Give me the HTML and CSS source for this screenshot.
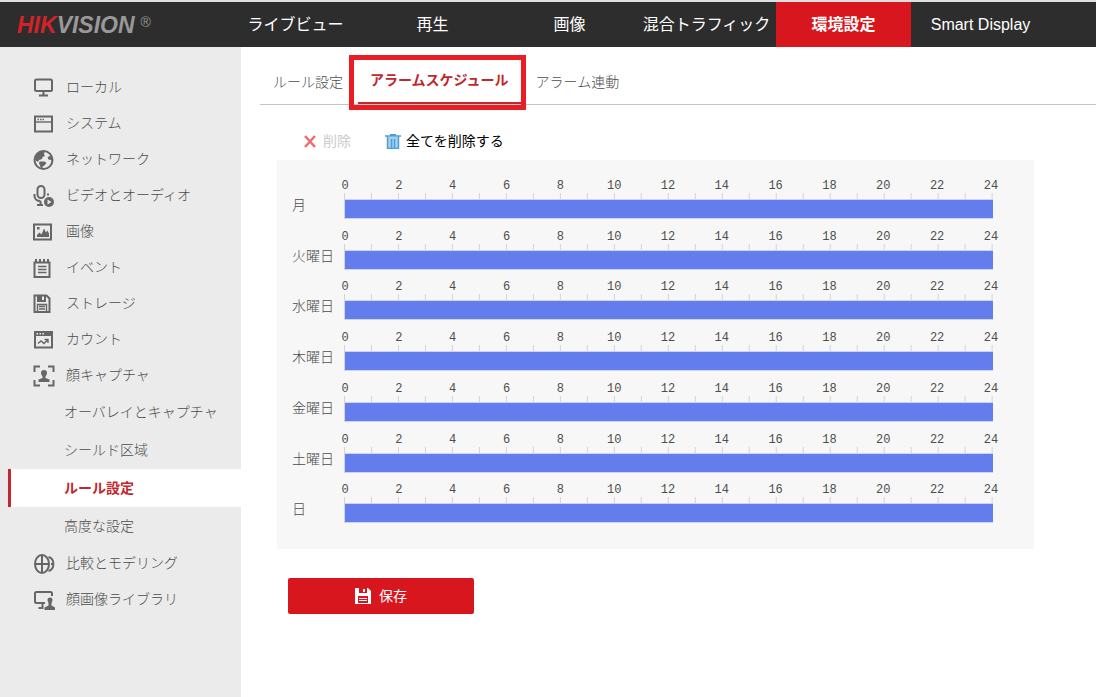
FILE: index.html
```html
<!DOCTYPE html>
<html lang="ja">
<head>
    <meta charset="utf-8">
    <title>環境設定</title>
    <link rel="stylesheet" href="styles.css">
</head>

<body>
    <header class="header">
        <a class="logo" href="#"><span class="logo-red">HIK</span>VISION<span class="logo-mark">®</span></a>
        <nav class="main-nav">
            <a href="#">ライブビュー</a>
            <a href="#">再生</a>
            <a href="#">画像</a>
            <a href="#">混合トラフィック</a>
            <a href="#" class="active">環境設定</a>
            <a href="#">Smart Display</a>
        </nav>
    </header>

    <div class="page">
        <nav class="sidebar">
            <a class="menu-item" href="#">
                <svg class="icon" viewBox="0 0 22 22"><rect x="2" y="2.500" width="17" height="11.500" rx="1.500"/><path d="M10.500 14v4M6 18.500h9"/></svg>
                ローカル
            </a>
            <a class="menu-item" href="#">
                <svg class="icon" viewBox="0 0 22 22"><rect x="2" y="3.500" width="17" height="15"/><path class="thin" d="M2 9h17"/><path class="thin" d="M4.500 6.500h1.500M7 6.500h1.500M9.500 6.500h1.500"/></svg>
                システム
            </a>
            <a class="menu-item" href="#">
                <svg class="icon" viewBox="0 0 22 22"><circle cx="10.500" cy="11" r="9"/><path class="fill" d="M2 11l1-5 4-4 4.500 1-.5 2.500 1 1.500-2.500 1-.5 2-3 1-1 2zM6.500 12.500h5l2 1.500-2 2.500-1.500.5-1 3-1.500-1.500-.5-2.500-1-1zM14.500 8.500l2.500-2 2.500 3v3l-1.500-1.500-2.500-.5z"/></svg>
                ネットワーク
            </a>
            <a class="menu-item" href="#">
                <svg class="icon" viewBox="0 0 22 22"><rect x="4.500" y="1" width="7" height="12" rx="3.500"/><path d="M1.500 9v2c0 2.500 2 5 6 5M7.500 16v4M4 20h6"/><path class="fill" d="M14 8.500h2v2h-2z"/><circle class="fill" cx="16" cy="17" r="5"/><path class="light" d="M14.500 14.500l4 2.500-4 2.500z"/></svg>
                ビデオとオーディオ
            </a>
            <a class="menu-item" href="#">
                <svg class="icon" viewBox="0 0 22 22"><rect x="1" y="3.500" width="17" height="15"/><path class="fill" d="M4 16v-2l2.500-2.500 2 2 2.500-6 2 4 1.500-2 1.500 3v3.500zM4 6h2.500v2.500H4z"/></svg>
                画像
            </a>
            <a class="menu-item" href="#">
                <svg class="icon" viewBox="0 0 22 22"><path d="M1.500 5.500V20h15V5.500z"/><path d="M3 2v3M7 2v3M11 2v3M15 2v3"/><path class="thin" d="M5 9.500h8.500M5 12.500h8.500M5 15.500h8.500"/></svg>
                イベント
            </a>
            <a class="menu-item" href="#">
                <svg class="icon" viewBox="0 0 22 22"><path d="M1.500 2.500h12l3 3v13.500h-15z"/><path class="fill" d="M4 3h9v6H4z"/><path class="light" d="M9 3.500h2V7H9z"/><path class="thin" d="M4.500 18v-6.500h9V18M6 13.500h6M6 16h6"/></svg>
                ストレージ
            </a>
            <a class="menu-item" href="#">
                <svg class="icon" viewBox="0 0 22 22"><rect x="2" y="3" width="17" height="15.500"/><path class="fill" d="M2 3h17v4H2z"/><path class="light" d="M3.500 4H5v1.500H3.500zM6.500 4H8v1.500H6.500zM9.500 4H11v1.500H9.500z"/><path class="thin" d="M5 14.500l3-2.500 3 2.500 4-4M11.500 10.500H15V14"/></svg>
                カウント
            </a>
            <a class="menu-item" href="#">
                <svg class="icon" viewBox="0 0 22 22"><path d="M1.500 7V1.500H7M15 1.500h5.500V7M1.500 15v5.500H7M15 20.500h5.500V15"/><path class="fill" d="M11 5a3 3 0 0 1 3 3c0 1.500-1 2.500-1.500 3.500v1.500l4 1.500V17h-11v-2.500l4-1.500v-1.500C9 10.500 8 9.500 8 8a3 3 0 0 1 3-3z"/></svg>
                顔キャプチャ
            </a>
            <div class="submenu">
                <a href="#">オーバレイとキャプチャ</a>
                <a href="#">シールド区域</a>
                <a href="#" class="active">ルール設定</a>
                <a href="#">高度な設定</a>
            </div>
            <a class="menu-item" href="#">
                <svg class="icon" viewBox="0 0 22 22"><ellipse cx="9" cy="11" rx="7" ry="9"/><path d="M9 2v18M2 11h14"/><path d="M15.500 4c6.500 1.500 6.500 12.500 0 14M18 11h2.500"/></svg>
                比較とモデリング
            </a>
            <a class="menu-item" href="#">
                <svg class="icon" viewBox="0 0 22 22"><path d="M19 7V4.500C19 3.500 18.500 3 17.500 3h-14C2.500 3 2 3.500 2 4.500v8c0 1 .5 1.500 1.500 1.500H12M9.500 14v4M5.500 19h5"/><path class="fill" d="M17 8.500a2.500 2.500 0 0 1 2.500 2.500c0 1.500-1 2-1 3.500v2l3.500 2V21H11.500v-2.500l4-2v-2c0-1.500-1-2-1-3.500A2.500 2.500 0 0 1 17 8.500z"/></svg>
                顔画像ライブラリ
            </a>
        </nav>

        <main class="content">
            <nav class="tabs">
                <a href="#">ルール設定</a>
                <a href="#" class="active">アラームスケジュール</a>
                <a href="#">アラーム連動</a>
            </nav>

            <div class="toolbar">
                <button type="button" class="tool" disabled>
                    <svg class="tool-icon" viewBox="0 0 16 16"><path d="M3 3l10 11M13 3L3 14" fill="none" stroke="#ec6c70" stroke-width="2.500"/></svg>
                    削除
                </button>
                <button type="button" class="tool">
                    <svg class="tool-icon" viewBox="0 0 16 16"><path d="M2 4h12v12H2z" fill="#a5cfec"/><path d="M5 1h6v2H5z" fill="#4f9fd6"/><path d="M0 3h16M2.500 3v12.500h11V3M6.500 6v9M9.500 6v9" fill="none" stroke="#4f9fd6" stroke-width="1.500"/></svg>
                    全てを削除する
                </button>
            </div>

            <section class="schedule">
                <div class="day">
                    <span class="day-name">月</span>
                    <div class="timeline">
                        <div class="hours"><span>0</span><span>2</span><span>4</span><span>6</span><span>8</span><span>10</span><span>12</span><span>14</span><span>16</span><span>18</span><span>20</span><span>22</span><span>24</span></div>
                        <div class="ticks"></div>
                        <div class="bar"></div>
                    </div>
                </div>
                <div class="day">
                    <span class="day-name">火曜日</span>
                    <div class="timeline">
                        <div class="hours"><span>0</span><span>2</span><span>4</span><span>6</span><span>8</span><span>10</span><span>12</span><span>14</span><span>16</span><span>18</span><span>20</span><span>22</span><span>24</span></div>
                        <div class="ticks"></div>
                        <div class="bar"></div>
                    </div>
                </div>
                <div class="day">
                    <span class="day-name">水曜日</span>
                    <div class="timeline">
                        <div class="hours"><span>0</span><span>2</span><span>4</span><span>6</span><span>8</span><span>10</span><span>12</span><span>14</span><span>16</span><span>18</span><span>20</span><span>22</span><span>24</span></div>
                        <div class="ticks"></div>
                        <div class="bar"></div>
                    </div>
                </div>
                <div class="day">
                    <span class="day-name">木曜日</span>
                    <div class="timeline">
                        <div class="hours"><span>0</span><span>2</span><span>4</span><span>6</span><span>8</span><span>10</span><span>12</span><span>14</span><span>16</span><span>18</span><span>20</span><span>22</span><span>24</span></div>
                        <div class="ticks"></div>
                        <div class="bar"></div>
                    </div>
                </div>
                <div class="day">
                    <span class="day-name">金曜日</span>
                    <div class="timeline">
                        <div class="hours"><span>0</span><span>2</span><span>4</span><span>6</span><span>8</span><span>10</span><span>12</span><span>14</span><span>16</span><span>18</span><span>20</span><span>22</span><span>24</span></div>
                        <div class="ticks"></div>
                        <div class="bar"></div>
                    </div>
                </div>
                <div class="day">
                    <span class="day-name">土曜日</span>
                    <div class="timeline">
                        <div class="hours"><span>0</span><span>2</span><span>4</span><span>6</span><span>8</span><span>10</span><span>12</span><span>14</span><span>16</span><span>18</span><span>20</span><span>22</span><span>24</span></div>
                        <div class="ticks"></div>
                        <div class="bar"></div>
                    </div>
                </div>
                <div class="day">
                    <span class="day-name">日</span>
                    <div class="timeline">
                        <div class="hours"><span>0</span><span>2</span><span>4</span><span>6</span><span>8</span><span>10</span><span>12</span><span>14</span><span>16</span><span>18</span><span>20</span><span>22</span><span>24</span></div>
                        <div class="ticks"></div>
                        <div class="bar"></div>
                    </div>
                </div>
            </section>

            <button type="submit" class="save">
                <svg class="tool-icon" viewBox="0 0 16 16"><path d="M0 0h13l3 3v13H0z" fill="#fff"/><path d="M4 0h8v5H4zM3 8h10v7H3z" fill="#d8161d"/><path d="M8 1h2v3H8zM4 10h8v1H4zM4 12h8v1H4z" fill="#fff"/></svg>
                保存
            </button>
        </main>
    </div>
</body>
</html>
```

FILE: styles.css
```css
* {
    box-sizing: border-box;
}

body {
    margin: 0;
    min-height: 100vh;
    display: flex;
    flex-direction: column;
    font-family: "Liberation Sans", "Noto Sans CJK JP", sans-serif;
    font-size: 14px;
    font-weight: 300;
    line-height: 20px;
    color: #4d4d4d;
    background-color: #fff;
}

a {
    color: inherit;
    text-decoration: none;
}

button {
    font: inherit;
    border: none;
    cursor: pointer;
}

/* header */
.header {
    display: flex;
    height: 47px;
    border-top: 2px solid #dde0e2;
    background-color: #2d2d2d;
}

.logo {
    flex: 0 0 228px;
    display: flex;
    align-items: center;
    padding-left: 17px;
    font-family: "Liberation Sans", sans-serif;
    font-size: 23px;
    font-weight: 700;
    font-style: italic;
    color: #999;
}

.logo-red {
    color: #d2232a;
}

.logo-mark {
    align-self: flex-start;
    margin: 10px 0 0 6px;
    font-size: 14px;
    font-weight: 400;
    font-style: normal;
}

.main-nav {
    display: flex;
    gap: 2px;
}

.main-nav a {
    width: 135px;
    display: flex;
    align-items: center;
    justify-content: center;
    font-size: 16px;
    font-weight: 400;
    white-space: nowrap;
    color: #fff;
}

.main-nav .active {
    font-weight: 700;
    background-color: #d8161d;
}

.page {
    flex: 1;
    display: flex;
}

/* left menu */
.sidebar {
    flex: 0 0 241px;
    padding-top: 22px;
    background-color: #ebebeb;
}

.menu-item {
    display: flex;
    align-items: center;
    gap: 11px;
    height: 36px;
    padding-left: 33px;
}

.icon {
    width: 22px;
    height: 22px;
    margin-top: 2px;
    fill: none;
    stroke: #666;
    stroke-width: 2;
}

.icon .thin {
    stroke-width: 1.4;
}

.icon .fill {
    fill: #666;
    stroke: none;
}

.icon .light {
    fill: #ebebeb;
    stroke: none;
}

.submenu a {
    display: flex;
    align-items: center;
    height: 38px;
    margin-left: 8px;
    padding-left: 53px;
    border-left: 3px solid transparent;
}

.submenu .active {
    font-weight: 700;
    color: #c1272d;
    border-left-color: #c1272d;
    background-color: #fff;
}

/* content */
.content {
    flex: 1;
    padding-left: 19px;
}

.tabs {
    display: flex;
    gap: 15px;
    height: 58px;
    padding-left: 13px;
    border-bottom: 1px solid #c4c4c4;
}

.tabs a {
    display: flex;
    align-items: center;
    padding-top: 12px;
}

.tabs .active {
    position: relative;
    padding: 10px 12px 0;
    font-weight: 700;
    color: #c1272d;
    border-bottom: 2px solid #c1272d;
}

/* frame round the current tab */
.tabs .active::after {
    content: "";
    position: absolute;
    top: 8px;
    right: -5px;
    bottom: -8px;
    left: -9px;
    border: 5px solid #ea1c24;
}

.toolbar {
    display: flex;
    gap: 34px;
    padding: 26px 0 9px 42px;
}

.tool {
    display: flex;
    align-items: center;
    gap: 5px;
    padding: 0;
    font-weight: 400;
    color: #000;
    background: none;
}

.tool:disabled {
    color: #ccc;
    cursor: default;
}

.tool-icon {
    width: 16px;
    height: 16px;
}

.schedule {
    display: grid;
    grid-template-rows: repeat(7, 1fr);
    min-height: 389px;
    margin: 0 62px 0 17px;
    padding: 18px 41px 16px 15px;
    background-color: #f7f7f7;
}

.day {
    display: grid;
    grid-template-columns: 52px 1fr;
}

.day-name {
    padding-top: 17px;
}

.hours {
    display: flex;
    justify-content: space-between;
    height: 15px;
    padding: 0 2px 0 1px;
    font-family: "Liberation Mono", monospace;
    font-size: 12px;
    line-height: 17px;
}

.hours span {
    display: flex;
    justify-content: center;
    width: 0;
}

.ticks {
    height: 6px;
    background-image: linear-gradient(to right, #d4d4d4 1px, transparent 1px);
    background-size: calc((100% - 1px) / 24) 6px;
}

.bar {
    height: 20px;
    border: 1px solid #cdd5ee;
    border-right: none;
    background-color: #637dec;
}

.save {
    display: flex;
    align-items: center;
    justify-content: center;
    gap: 8px;
    width: 186px;
    height: 36px;
    margin: 29px 0 0 28px;
    border-radius: 2px;
    font-weight: 400;
    color: #fff;
    background-color: #d8161d;
}
```
